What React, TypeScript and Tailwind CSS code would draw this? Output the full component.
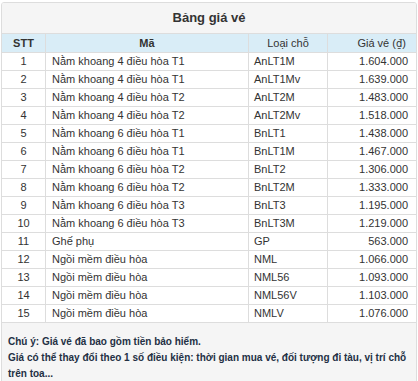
const rows: [number, string, string, string][] = [
  [1, "Nằm khoang 4 điều hòa T1", "AnLT1M", "1.604.000"],
  [2, "Nằm khoang 4 điều hòa T1", "AnLT1Mv", "1.639.000"],
  [3, "Nằm khoang 4 điều hòa T2", "AnLT2M", "1.483.000"],
  [4, "Nằm khoang 4 điều hòa T2", "AnLT2Mv", "1.518.000"],
  [5, "Nằm khoang 6 điều hòa T1", "BnLT1", "1.438.000"],
  [6, "Nằm khoang 6 điều hòa T1", "BnLT1M", "1.467.000"],
  [7, "Nằm khoang 6 điều hòa T2", "BnLT2", "1.306.000"],
  [8, "Nằm khoang 6 điều hòa T2", "BnLT2M", "1.333.000"],
  [9, "Nằm khoang 6 điều hòa T3", "BnLT3", "1.195.000"],
  [10, "Nằm khoang 6 điều hòa T3", "BnLT3M", "1.219.000"],
  [11, "Ghế phụ", "GP", "563.000"],
  [12, "Ngồi mềm điều hòa", "NML", "1.066.000"],
  [13, "Ngồi mềm điều hòa", "NML56", "1.093.000"],
  [14, "Ngồi mềm điều hòa", "NML56V", "1.103.000"],
  [15, "Ngồi mềm điều hòa", "NMLV", "1.076.000"],
];

export default function App() {
  return (
    <div className="w-[418px] h-[381px] overflow-hidden bg-white pt-[2px] pl-px font-['Liberation_Sans',Arial,sans-serif] text-[#333]">
      <div className="w-[416px] border border-[#ddd] rounded-[3px] overflow-hidden">
        {/* Heading */}
        <div className="h-[31px] bg-[#f5f5f5] border-b border-[#ddd] flex items-center justify-center">
          <h3 className="text-[13px] font-bold text-[#333]">Bảng giá vé</h3>
        </div>

        {/* Table header */}
        <div className="grid grid-cols-[43px_203px_79px_89px] h-[19px] bg-[#d9edf7] border-b border-[#ddd] text-[11px] leading-[18px]">
          <div className="text-center font-bold">STT</div>
          <div className="border-l border-[#ddd] text-center font-bold">Mã</div>
          <div className="border-l border-[#ddd] text-center">Loại chỗ</div>
          <div className="border-l border-[#ddd] text-right pr-[10px]">
            Giá vé (<span className="font-['DejaVu_Sans',sans-serif] text-[10px]">₫</span>)
          </div>
        </div>

        {/* Rows */}
        {rows.map(([stt, name, code, price]) => (
          <div
            key={stt}
            className="grid grid-cols-[43px_203px_79px_89px] h-[18px] border-b border-[#ddd] text-[11px] leading-[17px]"
          >
            <div className="text-center">{stt}</div>
            <div className="border-l border-[#ddd] pl-[6px] whitespace-nowrap">{name}</div>
            <div className="border-l border-[#ddd] pl-[5px]">{code}</div>
            <div className="border-l border-[#ddd] text-right pr-[8px]">{price}</div>
          </div>
        ))}

        {/* Footer note */}
        <div className="bg-[#f5f5f5] pt-[11px] pb-[12px] pl-[6px] pr-[6px] text-[10px] font-bold leading-[16px] text-[#233044]">
          <p>Chú ý: Giá vé đã bao gồm tiền bảo hiểm.</p>
          <p>Giá có thể thay đổi theo 1 số điều kiện: thời gian mua vé, đối tượng đi tàu, vị trí chỗ trên toa...</p>
        </div>
      </div>
    </div>
  );
}
